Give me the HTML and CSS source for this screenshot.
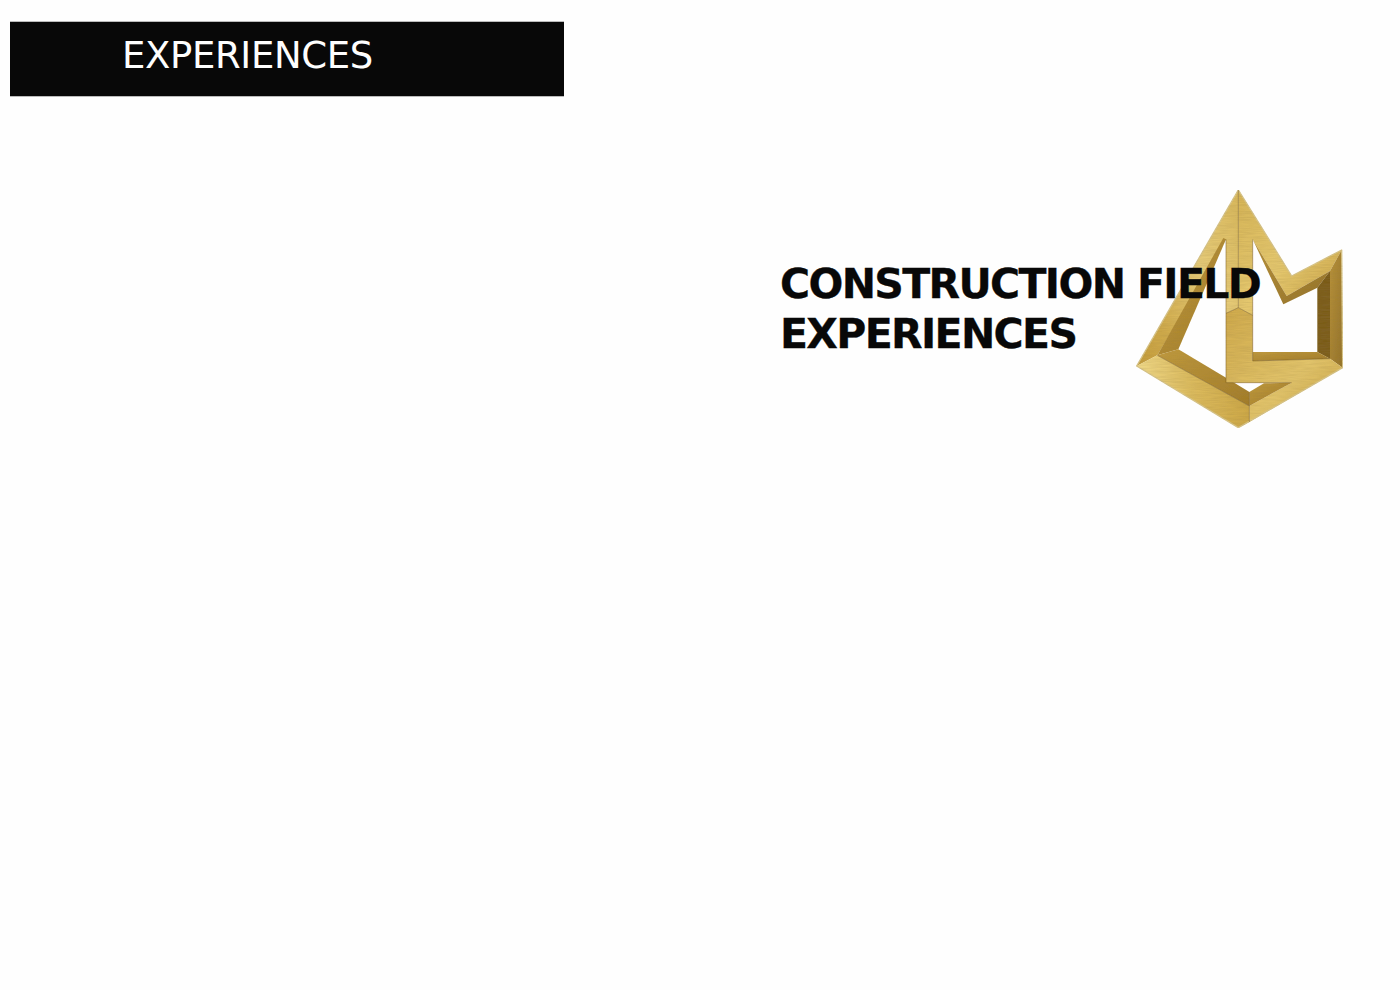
FILE: index.html
```html
<!DOCTYPE html>
<html lang="en">
<head>
<meta charset="utf-8">
<title>Experiences</title>
<link rel="stylesheet" href="styles.css">
</head>
<body>
<header class="banner"><h2 class="banner-title">EXPERIENCES</h2></header>
<main class="content">
  <section class="hero">
    <h1 class="hero-title">CONSTRUCTION FIELD<br>EXPERIENCES</h1>
    <svg class="logo" viewBox="0 0 720 795" aria-hidden="true">
      <defs>
        <linearGradient id="g1" x1="1" y1="0" x2="0" y2="1"><stop offset="0" stop-color="#d9b85c"/><stop offset=".4" stop-color="#e8cd7a"/><stop offset=".75" stop-color="#d2ad4e"/><stop offset="1" stop-color="#c49c3c"/></linearGradient>
        <linearGradient id="g2" x1="0" y1="0" x2="1" y2="1"><stop offset="0" stop-color="#d8b658"/><stop offset=".5" stop-color="#e6c970"/><stop offset="1" stop-color="#c9a244"/></linearGradient>
        <linearGradient id="g3" x1="0" y1="0" x2="1" y2="0"><stop offset="0" stop-color="#f0d988"/><stop offset=".5" stop-color="#dcbb5e"/><stop offset="1" stop-color="#cda848"/></linearGradient>
        <linearGradient id="g4" x1="0" y1="0" x2="1" y2="1"><stop offset="0" stop-color="#c09a3e"/><stop offset="1" stop-color="#a27c2a"/></linearGradient>
        <linearGradient id="g5" x1="0" y1="0" x2="1" y2="1"><stop offset="0" stop-color="#b8923a"/><stop offset="1" stop-color="#94722a"/></linearGradient>
        <linearGradient id="g6" x1="0" y1="0" x2="1" y2="1"><stop offset="0" stop-color="#d0aa4c"/><stop offset=".6" stop-color="#e3c56c"/><stop offset="1" stop-color="#c8a142"/></linearGradient>
        <filter id="brush" x="0" y="0" width="100%" height="100%">
          <feTurbulence type="fractalNoise" baseFrequency="0.02 0.5" numOctaves="2" seed="4" result="n"/>
          <feColorMatrix in="n" type="matrix" values="0 0 0 0 0.3  0 0 0 0 0.2  0 0 0 0 0.05  0 0 0 0.4 -0.1" result="t"/>
          <feComposite in="t" in2="SourceAlpha" operator="in" result="c"/>
          <feMerge><feMergeNode in="SourceGraphic"/><feMergeNode in="c"/></feMerge>
        </filter>
      </defs>
      <g filter="url(#brush)" stroke-linejoin="round">
        <path fill="url(#g1)" d="M355 42L355 395L318 412L318 190L112 538L50 570Z"/>
        <path fill="url(#g4)" d="M112 538L310 186L318 190L175 520Z"/>
        <path fill="url(#g2)" d="M355 42L515 300L665 222L630 285L500 360L398 190L398 418L355 395Z"/>
        <path fill="url(#g5)" d="M398 190L490 385L592 335L630 285L500 360Z"/>
        <path fill="url(#g5)" d="M630 285L665 222L668 575L630 548Z"/>
        <path fill="#7a5c1c" d="M592 335L630 285L630 548L592 528Z"/>
        <path fill="url(#g3)" d="M50 570L112 538L388 690L388 738L355 755Z"/>
        <path fill="url(#g4)" d="M175 520L112 538L388 690L388 648L345 622L318 605Z"/>
        <path fill="url(#g6)" d="M318 412L355 395L398 418L398 555L630 548L668 575L388 738L388 690L515 620L318 620Z"/>
        <path fill="url(#g4)" d="M388 690L515 620L432 622L388 648Z"/>
        <path fill="url(#g4)" d="M398 528L592 528L630 548L398 555Z"/>
        <path class="edge" d="M355 42L515 300L665 222L668 575L355 755L50 570Z"/>
        <path class="line" d="M355 42L355 395M318 190L318 620L515 620M398 190L398 555L630 548M318 412L355 395L398 418M388 648L388 738M112 538L388 690"/>
      </g>
    </svg>
  </section>
</main>
</body>
</html>
```
FILE: styles.css
```css
* { box-sizing: border-box; }
html, body { margin: 0; height: 990px; overflow: hidden; }
body { background: #fefefe; font-family: "DejaVu Sans", sans-serif; color: #080808; }
.banner {
  width: 554px; height: 76px; margin: 21px 0 0 10px; padding: 0 0 8px 112px;
  display: flex; align-items: center; background: #080808;
  border-top: 1px solid #bbb; border-bottom: 1px solid #bbb;
}
.banner-title { margin: 0; font-size: 37px; font-weight: 400; color: #fefefe; letter-spacing: -.35px; }
.content { padding: 79px 0 0 780px; }
.hero { position: relative; width: 580px; height: 265px; }
.hero-title {
  position: relative; z-index: 1; margin: 0; padding-top: 83px;
  font-size: 41px; line-height: 50px; font-weight: 700; white-space: nowrap;
  letter-spacing: -1.65px; -webkit-text-stroke: .3px #080808;
}
.logo { position: absolute; left: 340px; top: 0; width: 240px; height: 265px; }
.edge { fill: none; stroke: #d9c68a; stroke-width: 4; }
.line { fill: none; stroke: #6b5119; stroke-width: 2; opacity: .7; }
```
